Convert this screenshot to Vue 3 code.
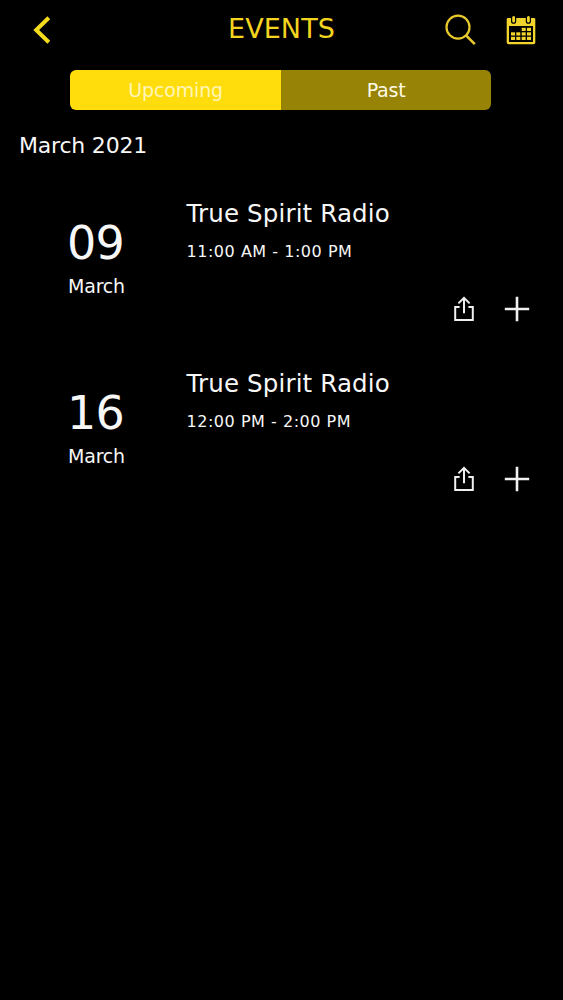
<script setup>
import { ref } from 'vue'

const tabs = ['Upcoming', 'Past']
const activeTab = ref('Upcoming')

const events = [
    { day: '09', month: 'March', title: 'True Spirit Radio', time: '11:00 AM - 1:00 PM' },
    { day: '16', month: 'March', title: 'True Spirit Radio', time: '12:00 PM - 2:00 PM' },
]
</script>

<template>
    <div class="page">
        <header class="header">
            <button class="back" aria-label="Back">
                <svg width="18" height="28" viewBox="0 0 18 28">
                    <path d="M15.8 1.8 L3.2 14 L15.8 26.2" fill="none" stroke="#f4dc1c" stroke-width="4" />
                </svg>
            </button>
            <h1>EVENTS</h1>
            <div class="tools">
                <button aria-label="Search">
                    <svg width="32" height="32" viewBox="0 0 32 32" fill="none" stroke="#e8c92c">
                        <circle cx="13" cy="13.2" r="11.5" stroke-width="2.2" />
                        <path d="M21 21.3 L29.8 30.2" stroke-width="2.6" />
                    </svg>
                </button>
                <button aria-label="Calendar">
                    <svg width="30" height="30" viewBox="0 0 30 30">
                        <path
                            d="M2 3 H28 Q29.3 3 29.3 4.3 V27.5 Q29.3 29.3 27.5 29.3 H2.5 Q0.7 29.3 0.7 27.5 V4.3 Q0.7 3 2 3 Z M3 11 V27 H27 V11 Z"
                            fill="#f1d52c" fill-rule="evenodd" />
                        <g fill="#f1d52c" stroke="#000" stroke-width="1.2">
                            <rect x="5.6" y="0.4" width="4" height="7.8" rx="2" />
                            <rect x="20.4" y="0.4" width="4" height="7.8" rx="2" />
                        </g>
                        <g fill="#f1d52c">
                            <rect x="15.7" y="12.8" width="4" height="3.2" />
                            <rect x="21" y="12.8" width="4" height="3.2" />
                            <rect x="5" y="17.3" width="4" height="3.2" />
                            <rect x="10.3" y="17.3" width="4" height="3.2" />
                            <rect x="15.7" y="17.3" width="4" height="3.2" />
                            <rect x="21" y="17.3" width="4" height="3.2" />
                            <rect x="5" y="21.8" width="4" height="3.2" />
                            <rect x="10.3" y="21.8" width="4" height="3.2" />
                            <rect x="15.7" y="21.8" width="4" height="3.2" />
                            <rect x="21" y="21.8" width="4" height="3.2" />
                        </g>
                    </svg>
                </button>
            </div>
        </header>

        <nav class="tabs">
            <button v-for="tab in tabs" :key="tab" :class="{ active: tab === activeTab }" @click="activeTab = tab">
                {{ tab }}
            </button>
        </nav>

        <h2>March 2021</h2>

        <ul class="events">
            <li v-for="event in events" :key="event.day">
                <div class="date">
                    <span class="day">{{ event.day }}</span>
                    <span class="month">{{ event.month }}</span>
                </div>
                <div class="info">
                    <h3>{{ event.title }}</h3>
                    <p>{{ event.time }}</p>
                    <div class="actions">
                        <button aria-label="Share">
                            <svg width="20" height="26" viewBox="0 0 20 26" fill="none" stroke="#f0f0f0" stroke-width="2">
                                <path d="M5.6 11 H1.2 V24 H18.8 V11 H14.4" />
                                <path d="M10 17.2 V2.4 M4.4 7.4 L10 1.9 L15.6 7.4" />
                            </svg>
                        </button>
                        <button aria-label="Add">
                            <svg width="26" height="26" viewBox="0 0 26 26" fill="none" stroke="#f0f0f0" stroke-width="2.6">
                                <path d="M13 0.8 V25.2 M0.8 13 H25.2" />
                            </svg>
                        </button>
                    </div>
                </div>
            </li>
        </ul>
    </div>
</template>

<style>
body {
    margin: 0;
    background: #000;
}
</style>

<style scoped>
.page {
    min-height: 1000px;
    background: #000;
    color: #f7f7f7;
    font-family: Verdana, "DejaVu Sans", sans-serif;
}

h1,
h2,
h3,
p,
ul {
    margin: 0;
    padding: 0;
    font-weight: normal;
    list-style: none;
}

button {
    display: block;
    padding: 0;
    border: 0;
    background: none;
    color: inherit;
    font-family: inherit;
}

svg {
    display: block;
}

.header {
    display: grid;
    grid-template-columns: 1fr auto 1fr;
    align-items: center;
    height: 60px;
    padding: 0 27px;
    box-sizing: border-box;
}

.back {
    margin-left: 6px;
}

h1 {
    color: #f3d51f;
    font-size: 27px;
    letter-spacing: 0.1px;
    line-height: 58px;
    height: 60px;
}

.tools {
    display: flex;
    align-items: center;
    justify-content: flex-end;
    gap: 29px;
}

.tabs {
    display: flex;
    width: 421px;
    height: 40px;
    margin: 10px 0 0 70.4px;
    border-radius: 6px;
    overflow: hidden;
}

.tabs button {
    flex: 1;
    background: #978306;
    color: #fffbe6;
    font-size: 19px;
    letter-spacing: -0.15px;
    line-height: 40px;
}

.tabs .active {
    background: #ffdc0c;
    color: #fff6b8;
}

h2 {
    padding-left: 19px;
    margin-top: 16px;
    font-size: 22px;
    letter-spacing: -0.2px;
    line-height: 40px;
    height: 40px;
}

.events li {
    display: flex;
    height: 170px;
}

.date {
    display: flex;
    flex-direction: column;
    align-items: center;
    width: 193px;
    padding-top: 50px;
    box-sizing: border-box;
}

.day {
    margin-right: 2px;
    font-size: 46px;
    letter-spacing: -0.8px;
    line-height: 54px;
    height: 54px;
}

.month {
    font-size: 19px;
    letter-spacing: -0.2px;
    line-height: 32px;
}

.info {
    flex: 1;
    margin-left: -7px;
    padding: 33px 33px 0 0;
}

h3 {
    padding-left: 0.5px;
    font-size: 24.5px;
    letter-spacing: 0.15px;
    line-height: 30px;
}

p {
    margin-top: 10px;
    padding-left: 0.5px;
    font-size: 16px;
    letter-spacing: 0.53px;
    line-height: 26px;
}

.actions {
    display: flex;
    justify-content: flex-end;
    gap: 30px;
    margin-top: 31px;
}
</style>
